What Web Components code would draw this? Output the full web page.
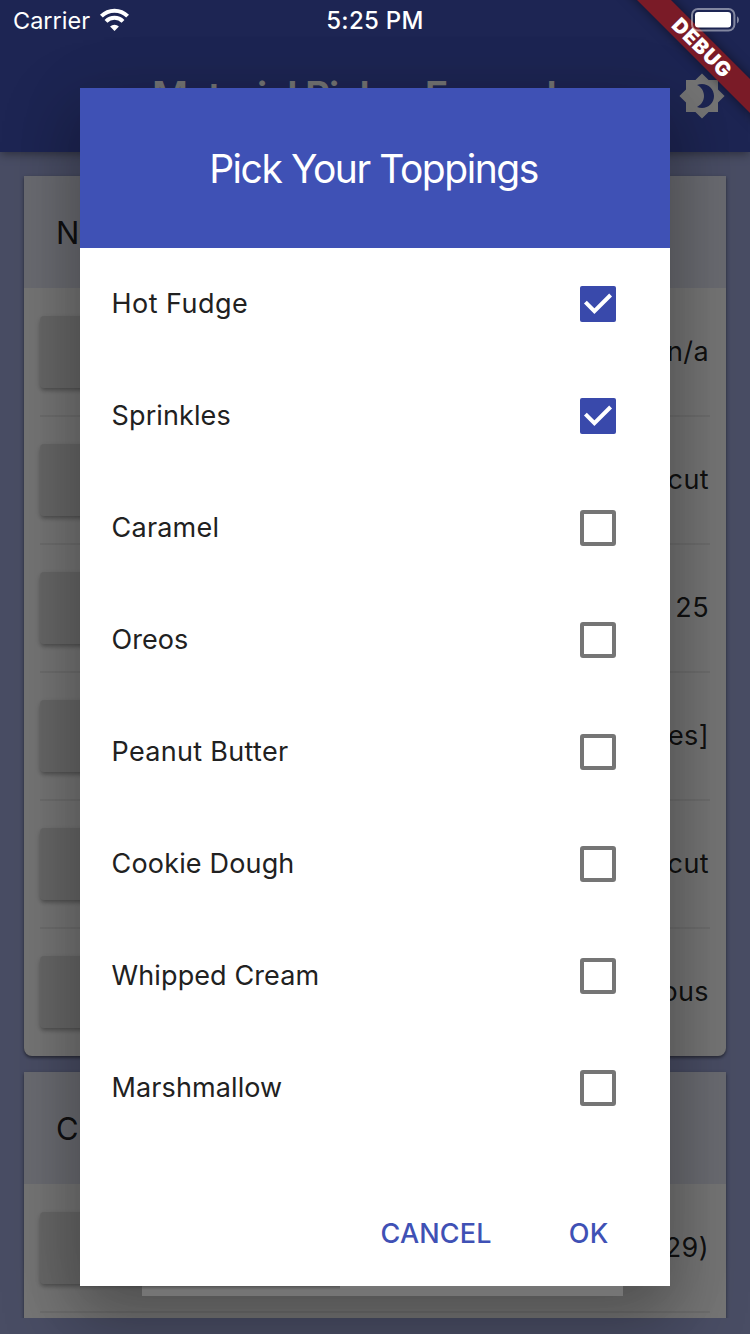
<!DOCTYPE html>
<html lang="en">
<head>
<meta charset="utf-8">
<title>Material Picker Examples</title>
<style>
html,body{margin:0;padding:0;width:750px;height:1334px;overflow:hidden;font-family:Inter,Roboto,sans-serif}
</style>
</head>
<body>
<picker-app></picker-app>
<script>
const define = (name, html) => customElements.define(name, class extends HTMLElement {
  constructor() {
    super();
    this.attachShadow({mode: 'open'}).innerHTML = html;
  }
});

define('app-bar', `<style>
:host{box-sizing:border-box;height:152px;padding-top:40px;display:grid;grid-template-columns:1fr;background:#3f51b5;position:relative;box-shadow:0 3px 7px -2px rgba(0,0,0,.25),0 4px 10px rgba(0,0,0,.16);z-index:1}
.t{grid-area:1/1;padding-left:152px;align-self:center;font-size:39px;font-weight:600;line-height:48px;letter-spacing:-1.15px;color:#fff;white-space:nowrap}
svg{grid-area:1/1;justify-self:end;align-self:center;margin-right:24px;width:48px;height:48px}
</style><div class="t"><slot></slot></div>
<svg viewBox="0 0 24 24" fill="#fff"><path d="M20 8.69V4h-4.69L12 .69 8.69 4H4v4.69L.69 12 4 15.31V20h4.69L12 23.31 15.31 20H20v-4.69L23.31 12 20 8.69zM12 18c-.89 0-1.74-.2-2.5-.55C11.56 16.5 13 14.42 13 12s-1.44-4.5-3.5-5.45C10.26 6.2 11.11 6 12 6c3.31 0 6 2.69 6 6s-2.69 6-6 6z"/></svg>`);

define('value-row', `<style>
:host{height:128px;margin:0 16px;display:flex;align-items:center;justify-content:space-between;position:relative;font-size:27px;font-weight:380;letter-spacing:.4px;color:rgba(0,0,0,.87)}
:host([ruled])::after{content:"";position:absolute;left:0;right:0;bottom:-1px;height:2px;background:rgba(0,0,0,.07)}
.b{width:176px;height:72px;border-radius:4px;background:#e0e0e0;box-shadow:0 3px 4px -1px rgba(0,0,0,.26),0 2px 6px rgba(0,0,0,.12)}
span{padding:0 1px 2px 0}
</style><div class="b"></div><span><slot></slot></span>`);

define('picker-card', `<style>
:host{display:block;background:#fff;border-radius:0 0 8px 8px;box-shadow:0 2px 3px rgba(0,0,0,.35),0 1px 4px rgba(0,0,0,.16)}
header{height:112px;box-sizing:border-box;padding-left:32px;display:flex;align-items:center;background:#e8eaf6;font-size:31px;font-weight:380;color:rgba(0,0,0,.87)}
</style><header><slot name="title"></slot></header><slot></slot>`);

define('check-row', `<style>
:host{box-sizing:border-box;height:112px;padding:0 54px 0 31.6px;display:flex;align-items:center;justify-content:space-between;font-size:27px;font-weight:380;letter-spacing:var(--track,.05px);color:#212121}
span{padding-bottom:2px}
svg{width:36px;height:36px;display:block}
.on{display:none}
:host([checked]) .on{display:block}
:host([checked]) .off{display:none}
</style><span><slot></slot></span>
<svg viewBox="0 0 36 36"><g class="off"><rect x="2" y="2" width="32" height="32" rx="1" fill="none" stroke="#757575" stroke-width="4"/></g>
<g class="on"><rect width="36" height="36" rx="2" fill="#3949ab"/><path d="M5.4 16.2L14.4 25.2L30.6 9" fill="none" stroke="#fff" stroke-width="4"/></g></svg>`);

define('picker-dialog', `<style>
:host{width:590px;height:1198px;display:flex;flex-direction:column;background:#fff;position:relative}
h1{margin:0;padding-right:3px;height:160px;display:flex;align-items:center;justify-content:center;background:#3f51b5;color:#fff;font-size:39px;font-weight:400;letter-spacing:-1.45px}
main{flex:1;display:flex;flex-direction:column}
footer{height:106px;box-sizing:border-box;display:flex;align-items:center;justify-content:flex-end;gap:77px;padding:0 61.5px 0 0;font-size:27px;font-weight:500;letter-spacing:.2px;color:#3f51b5}
</style><h1><slot name="title"></slot></h1><main><slot></slot></main><footer><span>CANCEL</span><span>OK</span></footer>`);

define('status-bar', `<style>
:host{height:42px;width:750px;display:grid;grid-template-columns:1fr auto 1fr;align-items:start;color:#fff;font-size:24px;line-height:42px}
.l{display:flex;gap:9px;padding-left:13px}
.l span{font-size:23.5px}
.l svg{margin-top:8px}
.c{font-weight:500;letter-spacing:.3px}
.r{justify-self:end;padding:8px 10px 0 0}
svg{display:block}
</style>
<div class="l"><span>Carrier</span><svg width="30" height="24" viewBox="0 0 30 24" fill="none" stroke="#fff"><path d="M2.4 8.2A18.4 18.4 0 0 1 28.6 8.2" stroke-width="4"/><path d="M7 13.4A12 12 0 0 1 24 13.4" stroke-width="4"/><path d="M15.5 23L11.1 18.5A6.3 6.3 0 0 1 19.9 18.5Z" fill="#fff" stroke="none"/></svg></div>
<div class="c">5:25 PM</div>
<div class="r"><svg width="50" height="24" viewBox="0 0 50 24"><rect x="2" y="1" width="42.4" height="21.6" rx="6" fill="none" stroke="#fff" stroke-opacity=".45" stroke-width="2"/><rect x="5" y="4" width="36" height="15.4" rx="3.2" fill="#fff"/><path d="M47 8.2Q49 9.2 49 11.8T47 15.4Z" fill="#fff" fill-opacity=".45"/></svg></div>`);

define('debug-ribbon', `<style>
:host{display:block;width:750px;height:160px;overflow:hidden;position:relative}
div{position:absolute;left:592px;top:36px;width:220px;height:24px;transform:rotate(45deg);background:#7a1b27;box-shadow:0 0 12px rgba(0,0,0,.5);color:#fff;font-size:20.4px;font-weight:900;letter-spacing:.8px;line-height:24px;text-align:center}
</style><div><slot></slot></div>`);

define('picker-app', `<style>
:host{display:grid;width:750px;height:1334px;overflow:hidden;background:#9fa8da}
.page,.barrier,.shadow,.strip,picker-dialog,debug-ribbon,status-bar{grid-area:1/1}
.page{height:1334px;overflow:hidden}
.list{box-sizing:border-box;height:1166px;overflow:hidden;padding:24px 24px 0;display:flex;flex-direction:column;gap:16px}
.barrier{background:rgba(0,0,0,.54);position:relative;z-index:2}
.shadow{position:relative;z-index:2;width:590px;height:1198px;margin:88px 0 0 80px;box-shadow:0 30px 64px 8px rgba(0,0,0,.28),0 8px 70px rgba(0,0,0,.08)}
.strip{position:relative;z-index:3;width:481px;height:10px;margin:1286px 0 0 142px;background:#757575}
.strip i{display:block;width:198px;height:4px;background:linear-gradient(#555,#757575)}
picker-dialog{z-index:4;margin:88px 0 0 80px}
debug-ribbon{z-index:5}
status-bar{z-index:6;position:relative}
</style>
<div class="page"><app-bar>Material Picker Examples</app-bar>
<div class="list">
<picker-card><span slot="title">N</span><value-row ruled>n/a</value-row><value-row ruled>cut</value-row><value-row ruled>25</value-row><value-row ruled>es]</value-row><value-row ruled>cut</value-row><value-row>ous</value-row></picker-card>
<picker-card><span slot="title">Co</span><value-row ruled>29)</value-row><value-row></value-row></picker-card>
</div></div>
<div class="barrier"></div><div class="shadow"></div><div class="strip"><i></i></div>
<picker-dialog><span slot="title">Pick Your Toppings</span>
<check-row checked style="--track:.45px">Hot Fudge</check-row><check-row checked style="--track:.1px">Sprinkles</check-row><check-row style="--track:.2px">Caramel</check-row><check-row>Oreos</check-row><check-row style="--track:.3px">Peanut Butter</check-row><check-row style="--track:.16px">Cookie Dough</check-row><check-row style="--track:.1px">Whipped Cream</check-row><check-row style="--track:.1px">Marshmallow</check-row></picker-dialog>
<debug-ribbon>DEBUG</debug-ribbon><status-bar></status-bar>`);
</script>
</body>
</html>
